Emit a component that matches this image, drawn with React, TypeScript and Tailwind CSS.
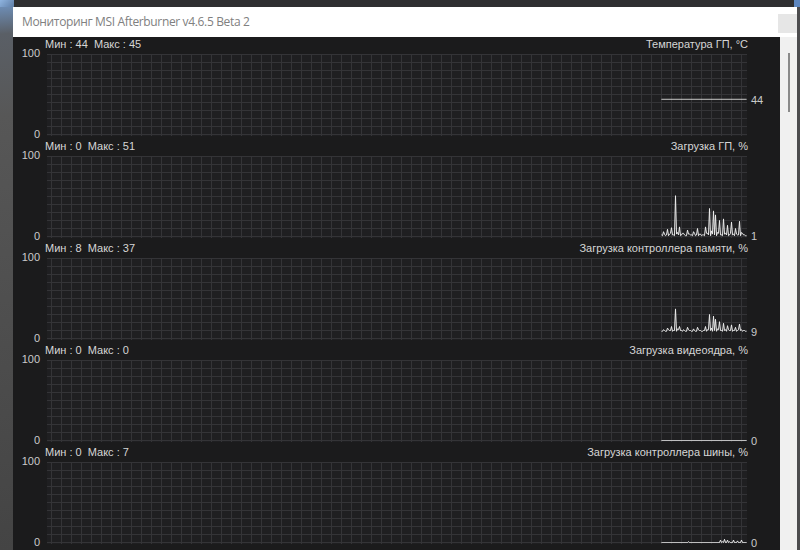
import React from 'react';

interface GraphInfo {
  min: number;
  max: number;
  title: string;
  data: number[];
}

const flat = (v: number) => Array.from({ length: 86 }, () => v);

// needles: every sample followed by a baseline sample
const needles = (peaks: number[], base: number[]) =>
  peaks.flatMap((v, i) => [v, base[i % base.length]]);

const gpuLoad = needles(
  [2, 6, 1, 9, 3, 11, 2, 51, 5, 12, 2, 4, 1, 8, 3, 2, 6, 1, 10, 3, 1, 2, 12, 4, 35, 7, 32, 27, 5, 20, 2, 22, 4, 14, 2, 18, 3, 10, 2, 19, 5, 2, 1],
  [1, 3, 2, 1, 4, 2]
);
const memLoad = needles(
  [9, 11, 9, 13, 10, 15, 10, 37, 12, 15, 10, 11, 9, 14, 10, 9, 12, 9, 14, 10, 9, 10, 15, 11, 30, 13, 28, 24, 12, 21, 10, 19, 11, 16, 10, 17, 10, 14, 10, 18, 11, 10, 9],
  [9, 10, 9, 11, 10]
);
const busLoad = flat(0).map((v, i) => {
  const bumps: Record<number, number> = { 27: 1, 59: 3, 61: 1, 63: 4, 66: 3, 68: 1, 72: 3, 76: 2, 80: 3 };
  return bumps[i] ?? v;
});

const graphs: GraphInfo[] = [
  { min: 44, max: 45, title: 'Температура ГП, °C', data: flat(44) },
  { min: 0, max: 51, title: 'Загрузка ГП, %', data: gpuLoad },
  { min: 8, max: 37, title: 'Загрузка контроллера памяти, %', data: memLoad },
  { min: 0, max: 0, title: 'Загрузка видеоядра, %', data: flat(0) },
  { min: 0, max: 7, title: 'Загрузка контроллера шины, %', data: busLoad },
];

const PLOT_W = 700;
const PLOT_H = 80;

const Graph: React.FC<{ g: GraphInfo; idx: number }> = ({ g, idx }) => {
  const start = PLOT_W - g.data.length;
  const points = g.data
    .map((v, i) => `${start + i + 0.5},${PLOT_H - v * 0.8 + 0.5}`)
    .join(' ');
  const last = g.data[g.data.length - 1];
  const lastLabel = idx === 1 ? 1 : idx === 2 ? 9 : last;

  return (
    <div className="flex h-[102px]">
      <div className="w-[27px] flex flex-col justify-between items-end pt-[9px] text-[11px] leading-[12px] text-[#cacaca]">
        <span>100</span>
        <span>0</span>
      </div>
      <div className="flex-1 flex flex-col">
        <div className="h-[12px] flex justify-between pl-[5px] pr-[32px] text-[11px] leading-[12px] text-[#d6d6d6]">
          <span className="whitespace-pre">{`Мин : ${g.min}  Макс : ${g.max}`}</span>
          <span>{g.title}</span>
        </div>
        <div className="flex mt-[4px]">
          <svg width={PLOT_W} height={82} className="ml-[7px] block">
            <defs>
              <pattern id={`grid${idx}`} width="10" height="8" patternUnits="userSpaceOnUse" x="4" y="0">
                <path d="M0.5 0V8M0 0.5H10" stroke="#343437" strokeWidth="1" fill="none" />
              </pattern>
            </defs>
            <rect x="0" y="0" width={PLOT_W} height="82" fill="#1f1f21" />
            <rect x="0" y="0" width={PLOT_W} height="82" fill={`url(#grid${idx})`} />
            <polyline points={points} fill="none" stroke="#ececec" strokeWidth="1" />
          </svg>
          <div className="relative flex-1 h-[82px]">
            <span
              className="absolute left-[4px] text-[11px] leading-[12px] text-[#cacaca]"
              style={{ top: PLOT_H - lastLabel * 0.8 - 5 }}
            >
              {lastLabel}
            </span>
          </div>
        </div>
      </div>
    </div>
  );
};

export default function App() {
  return (
    <div className="w-[800px] h-[550px] overflow-hidden flex flex-col bg-[#474747] font-['Liberation_Sans',Arial,sans-serif]">
      <div className="h-[7px] flex shrink-0">
        <div className="w-[14px] bg-[linear-gradient(135deg,#8fb4e0,#5f7ea6)]" />
        <div className="flex-1 bg-[#2f2f31]" />
        <div className="w-[6px] bg-[#5d86bf]" />
      </div>
      <div className="flex flex-1 min-h-0">
        <div className="w-[13px] bg-[linear-gradient(175deg,#6d8cb3_0%,#5a5f66_5%,#575757_20%,#444_100%)]" />
        <div className="flex-1 flex flex-col min-w-0">
          <div className="h-[30px] bg-white flex items-center justify-between shrink-0">
            <span className="pl-[9px] text-[12px] text-[#808080] font-['Open_Sans','Noto_Sans',sans-serif] tracking-[-0.35px]">
              Мониторинг MSI Afterburner v4.6.5 Beta 2
            </span>
            <div className="w-[19px] h-[19px] bg-[#e6e6e6] mt-[3px]" />
          </div>
          <div className="flex flex-1 min-h-0">
            <div className="w-[767px] bg-[#1b1b1c] pt-[1px] flex flex-col">
              {graphs.map((g, i) => (
                <Graph key={i} g={g} idx={i} />
              ))}
            </div>
            <div className="flex-1 bg-[#f0f0f0] pl-[8px] pt-[16px]">
              <div className="w-[2px] h-[59px] bg-[#8a8a8a]" />
            </div>
          </div>
        </div>
        <div className="w-[3px] bg-[#4c4c4e]" />
      </div>
    </div>
  );
}
